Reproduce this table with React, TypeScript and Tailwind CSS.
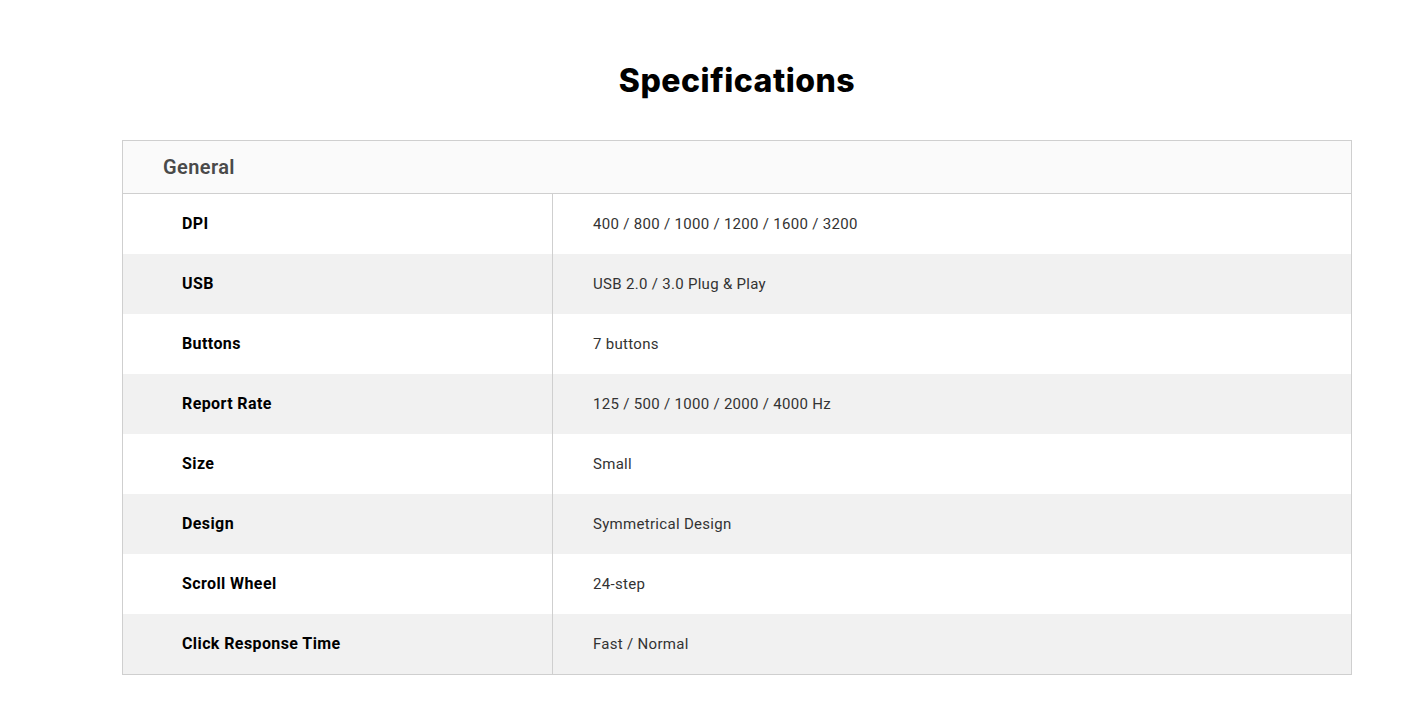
const specs: [string, string][] = [
  ['DPI', '400 / 800 / 1000 / 1200 / 1600 / 3200'],
  ['USB', 'USB 2.0 / 3.0 Plug & Play'],
  ['Buttons', '7 buttons'],
  ['Report Rate', '125 / 500 / 1000 / 2000 / 4000 Hz'],
  ['Size', 'Small'],
  ['Design', 'Symmetrical Design'],
  ['Scroll Wheel', '24-step'],
  ['Click Response Time', 'Fast / Normal'],
]

export default function App() {
  return (
    <div className="min-h-screen bg-white pt-[59px] font-['Roboto',sans-serif]">
      <div className="ml-[122px] w-[1230px]">
        <h2 className="text-center font-['Inter',sans-serif] text-[32px] font-extrabold leading-[44px] tracking-[0.5px] text-black">
          Specifications
        </h2>
        <div className="mt-[37px] border border-[#cfcfcf]">
          <div className="flex h-[53px] items-center border-b border-[#cfcfcf] bg-[#fafafa] pl-[40px]">
            <span className="text-[20px] font-semibold tracking-[0.4px] text-[#4a4a4a]">General</span>
          </div>
          {specs.map(([label, value], i) => (
            <div key={label} className={`flex h-[60px] ${i % 2 === 1 ? 'bg-[#f1f1f1]' : 'bg-white'}`}>
              <div className="flex w-[430px] items-center border-r border-[#cfcfcf] pl-[59px] text-[16px] font-bold tracking-[0.4px] text-black">
                {label}
              </div>
              <div className="flex flex-1 items-center pl-[40px] text-[15px] tracking-[0.3px] text-[#333]">
                {value}
              </div>
            </div>
          ))}
        </div>
      </div>
    </div>
  )
}
